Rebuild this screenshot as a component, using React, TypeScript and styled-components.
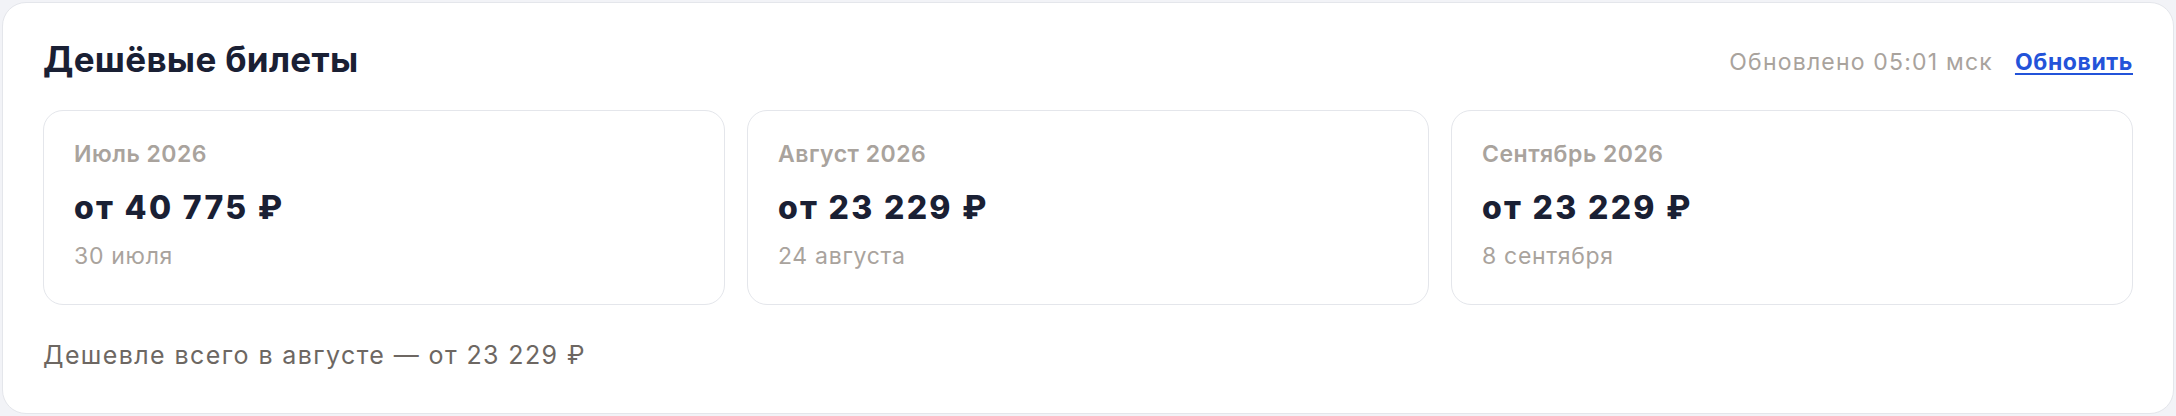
import React from "react";
import styled, { createGlobalStyle } from "styled-components";

const textDark = "#1a2034";
const textMuted = "#a9a39d";
const textBody = "#6d6762";
const linkBlue = "#2353d9";
const borderGrey = "#e4e6eb";

const GlobalStyle = createGlobalStyle`
  html, body {
    margin: 0;
    padding: 0;
    background: #f2f3f7;
    font-family: Inter, "Noto Sans", sans-serif;
  }
`;

type Offer = {
  month: string;
  price: string;
  date: string;
};

const offers: Offer[] = [
  { month: "Июль 2026", price: "от 40 775 ₽", date: "30 июля" },
  { month: "Август 2026", price: "от 23 229 ₽", date: "24 августа" },
  { month: "Сентябрь 2026", price: "от 23 229 ₽", date: "8 сентября" },
];

const App: React.FC = () => {
  return (
    <Page>
      <GlobalStyle />
      <Card>
        <Header>
          <Title>Дешёвые билеты</Title>
          <Meta>
            <Updated>Обновлено 05:01 мск</Updated>
            <RefreshLink href="#">Обновить</RefreshLink>
          </Meta>
        </Header>

        <Tiles>
          {offers.map((o) => (
            <Tile key={o.month}>
              <Month>{o.month}</Month>
              <Price>{o.price}</Price>
              <DateText>{o.date}</DateText>
            </Tile>
          ))}
        </Tiles>

        <Summary>Дешевле всего в августе — от 23 229 ₽</Summary>
      </Card>
    </Page>
  );
};

export default App;

const Page = styled.div`
  padding: 2px;
`;

const Card = styled.section`
  background: #fff;
  border: 1px solid ${borderGrey};
  border-radius: 24px;
  padding: 36px 40px 44px;
  height: 412px;
  box-sizing: border-box;
`;

const Header = styled.div`
  display: flex;
  align-items: center;
  justify-content: space-between;
`;

const Title = styled.h2`
  margin: 0;
  font-size: 35px;
  line-height: 40px;
  font-weight: 700;
  color: ${textDark};
  letter-spacing: 0.3px;
`;

const Meta = styled.div`
  display: flex;
  align-items: center;
  gap: 22px;
  padding-top: 6px;
`;

const Updated = styled.span`
  font-size: 23px;
  color: ${textMuted};
  letter-spacing: 1.2px;
`;

const RefreshLink = styled.a`
  font-size: 23px;
  font-weight: 700;
  color: ${linkBlue};
  letter-spacing: 0.6px;
  text-decoration: underline;
  text-underline-offset: 3px;
  text-decoration-thickness: 2px;
`;

const Tiles = styled.div`
  display: grid;
  grid-template-columns: repeat(3, 1fr);
  gap: 22px;
  margin-top: 31px;
`;

const Tile = styled.div`
  border: 1px solid ${borderGrey};
  border-radius: 20px;
  padding: 29px 30px 34px;
  display: flex;
  flex-direction: column;
`;

const Month = styled.div`
  font-size: 23px;
  line-height: 28px;
  font-weight: 600;
  color: ${textMuted};
  letter-spacing: 0.5px;
`;

const Price = styled.div`
  margin-top: 21px;
  font-size: 32px;
  line-height: 38px;
  font-weight: 800;
  color: ${textDark};
  letter-spacing: 2.3px;
`;

const DateText = styled.div`
  margin-top: 15px;
  font-size: 23px;
  line-height: 28px;
  color: ${textMuted};
  letter-spacing: 0.7px;
`;

const Summary = styled.p`
  margin: 35px 0 0;
  font-size: 25px;
  line-height: 30px;
  color: ${textBody};
  letter-spacing: 1.4px;
`;
